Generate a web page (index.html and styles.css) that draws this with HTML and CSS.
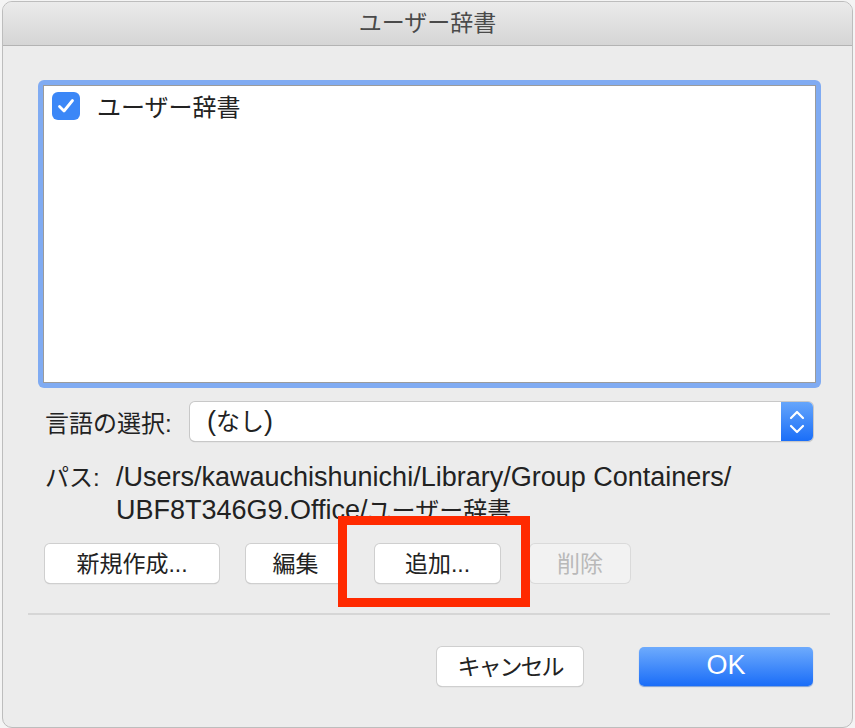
FILE: index.html
```html
<!DOCTYPE html>
<html>
<head>
  <title>ユーザー辞書</title>
  <link rel="stylesheet" href="styles.css">
</head>
<body>
  <div class="window">
    <div class="titlebar">ユーザー辞書</div>
    <div class="content">
      <div class="list-ring">
        <div class="list">
          <div class="list-item">
            <span class="checkbox">
              <svg width="22" height="22" viewBox="0 0 22 22"><path d="M4.5 11.5 L9 16 L17.5 5.5" fill="none" stroke="#fff" stroke-width="2.8" stroke-linecap="round" stroke-linejoin="round"/></svg>
            </span>
            <span>ユーザー辞書</span>
          </div>
        </div>
      </div>

      <div class="lang-row">
        <span class="label">言語の選択:</span>
        <div class="select">
          <span class="select-value"><span class="latin">(</span>なし<span class="latin">)</span></span>
          <span class="stepper">
            <svg width="20" height="30" viewBox="0 0 20 30"><path d="M4 11 L10 5 L16 11 M4 19 L10 25 L16 19" fill="none" stroke="#fff" stroke-width="2.2" stroke-linecap="round" stroke-linejoin="round"/></svg>
          </span>
        </div>
      </div>

      <div class="path-row">
        <span class="label">パス:</span>
        <span class="path"><span class="latin">/Users/kawauchishunichi/Library/Group Containers/</span><br><span class="latin">UBF8T346G9.Office/</span>ユーザー辞書</span>
      </div>

      <div class="btn-row">
        <button class="btn btn-new">新規作成...</button>
        <button class="btn btn-edit">編集</button>
        <button class="btn btn-add">追加...</button>
        <button class="btn btn-del" disabled>削除</button>
      </div>

      <div class="separator"></div>

      <div class="footer">
        <button class="btn btn-cancel">キャンセル</button>
        <button class="btn btn-ok">OK</button>
      </div>
    </div>
  </div>
  <div class="highlight"></div>
</body>
</html>
```

FILE: styles.css
```css
body {
  margin: 0;
  background: #f4f4f4;
  font-family: "Liberation Sans", "Noto Sans CJK JP", sans-serif;
  color: #222;
}

/* Latin runs are drawn larger, as Hiragino does */
.latin {
  font-size: 27px;
}

.window {
  position: relative;
  box-sizing: border-box;
  margin: 1px 2px 0 2px;
  height: 727px;
  background: #ececec;
  border: 1px solid #bdbdbd;
  border-radius: 10px;
  overflow: hidden;
}

.titlebar {
  height: 43px;
  line-height: 43px;
  text-align: center;
  font-size: 23px;
  color: #4a4a4a;
  background: linear-gradient(#ebebeb, #d5d5d5);
  border-bottom: 1px solid #b3b3b3;
}

.content {
  padding: 34px 31px 0 35px;
}

.list-ring {
  height: 308px;
  border-radius: 6px;
  background: #80abf2;
  padding: 5px;
  box-sizing: border-box;
}

.list {
  height: 100%;
  background: #fff;
  border: 1px solid #9b9b9b;
  box-sizing: border-box;
}

.list-item {
  display: flex;
  align-items: center;
  gap: 17px;
  padding: 2px 0 0 8px;
  font-size: 24px;
}

.checkbox {
  display: flex;
  align-items: center;
  justify-content: center;
  width: 28px;
  height: 28px;
  border-radius: 6px;
  background: #3b87f7;
}

.lang-row {
  display: flex;
  align-items: center;
  margin-top: 14px;
  margin-right: 8px;
  font-size: 24px;
}

.label {
  padding-left: 7px;
}

.lang-row .label {
  width: 145px;
}

.select {
  flex: 1;
  display: flex;
  height: 39px;
  box-sizing: border-box;
  background: #fff;
  border-radius: 5px;
  box-shadow: 0 0 0 1px #c8c8c8, 0 1px 1px #a8a8a8;
}

.select-value {
  flex: 1;
  padding-left: 17px;
  line-height: 39px;
}

.stepper {
  width: 32px;
  display: flex;
  align-items: center;
  justify-content: center;
  border-radius: 0 5px 5px 0;
  background: linear-gradient(#65a5fb, #1a6ef8);
}

.path-row {
  display: flex;
  margin-top: 20px;
  font-size: 24px;
  line-height: 33px;
}

.path-row .label {
  width: 71px;
}

.btn-row {
  display: flex;
  margin-top: 17px;
  padding-left: 7px;
}

.btn {
  height: 39px;
  font-family: inherit;
  font-size: 23px;
  color: #222;
  background: #fff;
  border: none;
  border-radius: 5px;
  box-shadow: 0 0 0 1px #cfcfcf, 0 1px 1px #a9a9a9;
  padding: 0 0 3px 0;
}

.btn-new { width: 174px; }
.btn-edit { width: 99px; margin-left: 27px; }
.btn-add { width: 125px; margin-left: 30px; }
.btn-del {
  width: 100px;
  margin-left: 30px;
  color: #b9b9b9;
  background: #f2f2f2;
  box-shadow: 0 0 0 1px #dadada;
}

.separator {
  height: 2px;
  background: #d6d6d6;
  margin: 30px -9px 0 -10px;
}

.footer {
  display: flex;
  justify-content: flex-end;
  gap: 56px;
  margin-top: 32px;
  margin-right: 8px;
}

.btn-cancel {
  width: 146px;
  letter-spacing: -2px;
}

.btn-ok {
  width: 174px;
  font-size: 27px;
  color: #fff;
  background: linear-gradient(#6eabfd, #1a6df8);
  box-shadow: 0 1px 1px #7a9ed6;
}

.highlight {
  position: absolute;
  left: 338px;
  top: 516px;
  width: 192px;
  height: 91px;
  box-sizing: border-box;
  border: 9px solid #ff2a00;
}
```
